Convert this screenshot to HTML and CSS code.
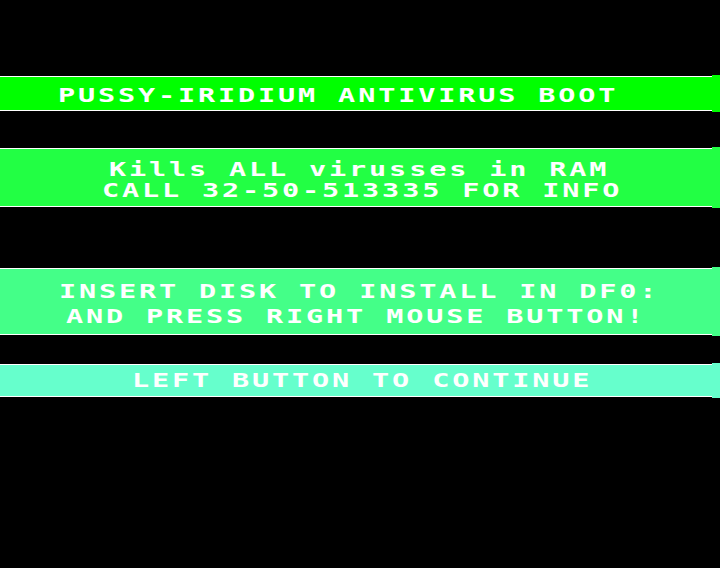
FILE: index.html
```html
<!DOCTYPE html>
<html>
<head>
<meta charset="utf-8">
<link rel="stylesheet" href="styles.css">
</head>
<body>
<div class="screen">
  <div class="bar bar1">
    <div class="band">
      <div class="line l1"><span class="txt">PUSSY-IRIDIUM ANTIVIRUS BOOT</span></div>
    </div>
    <div class="cap"></div>
  </div>
  <div class="bar bar2">
    <div class="band">
      <div class="line l2a"><span class="txt">Kills ALL virusses in RAM</span></div>
      <div class="line l2b"><span class="txt">CALL 32-50-513335 FOR INFO</span></div>
    </div>
    <div class="cap"></div>
  </div>
  <div class="bar bar3">
    <div class="band">
      <div class="line l3a"><span class="txt">INSERT DISK TO INSTALL IN DF0:</span></div>
      <div class="line l3b"><span class="txt">AND PRESS RIGHT MOUSE BUTTON!</span></div>
    </div>
    <div class="cap"></div>
  </div>
  <div class="bar bar4">
    <div class="band">
      <div class="line l4"><span class="txt">LEFT BUTTON TO CONTINUE</span></div>
    </div>
    <div class="cap"></div>
  </div>
</div>
</body>
</html>
```
FILE: styles.css
```css
html, body {
  margin: 0;
  padding: 0;
  background: #000;
}
.screen {
  width: 720px;
  height: 568px;
  overflow: hidden;
  background: #000;
  display: flex;
  flex-direction: column;
  font-family: "DejaVu Sans Mono", "Liberation Mono", monospace;
  font-weight: bold;
  font-size: 19px;
  color: #fff;
}
.bar {
  display: flex;
  width: 720px;
}
.band {
  flex: 1;
  border-top: 1px solid #fff;
  border-bottom: 1px solid #fff;
  display: flex;
  flex-direction: column;
}
.cap {
  width: 8px;
  margin: -1px 0;
}
.line {
  white-space: pre;
}
.txt {
  display: inline-block;
  letter-spacing: 1.9px;
  transform: scaleX(1.5);
  transform-origin: left center;
}

.bar1 { margin-top: 76px; }
.bar1 .band, .bar1 .cap { background: #00ff00; }
.bar1 .band { padding: 8px 0 5px; }
.bar1 .line { line-height: 20px; }

.bar2 { margin-top: 37px; }
.bar2 .band, .bar2 .cap { background: #22ff44; }
.bar2 .band { padding: 10px 0 5px; }
.bar2 .line { line-height: 21px; }

.bar3 { margin-top: 61px; }
.bar3 .band, .bar3 .cap { background: #44ff88; }
.bar3 .band { padding: 10px 0 5px; }
.bar3 .line { line-height: 25px; }

.bar4 { margin-top: 29px; }
.bar4 .band, .bar4 .cap { background: #66ffcc; }
.bar4 .band { padding: 5px 0 6px; }
.bar4 .line { line-height: 20px; }

.l1 { padding-left: 58px; }
.l2a { padding-left: 109px; }
.l2b { padding-left: 102px; }
.l3a { padding-left: 59px; }
.l3b { padding-left: 66px; }
.l4 { padding-left: 132px; }
```
